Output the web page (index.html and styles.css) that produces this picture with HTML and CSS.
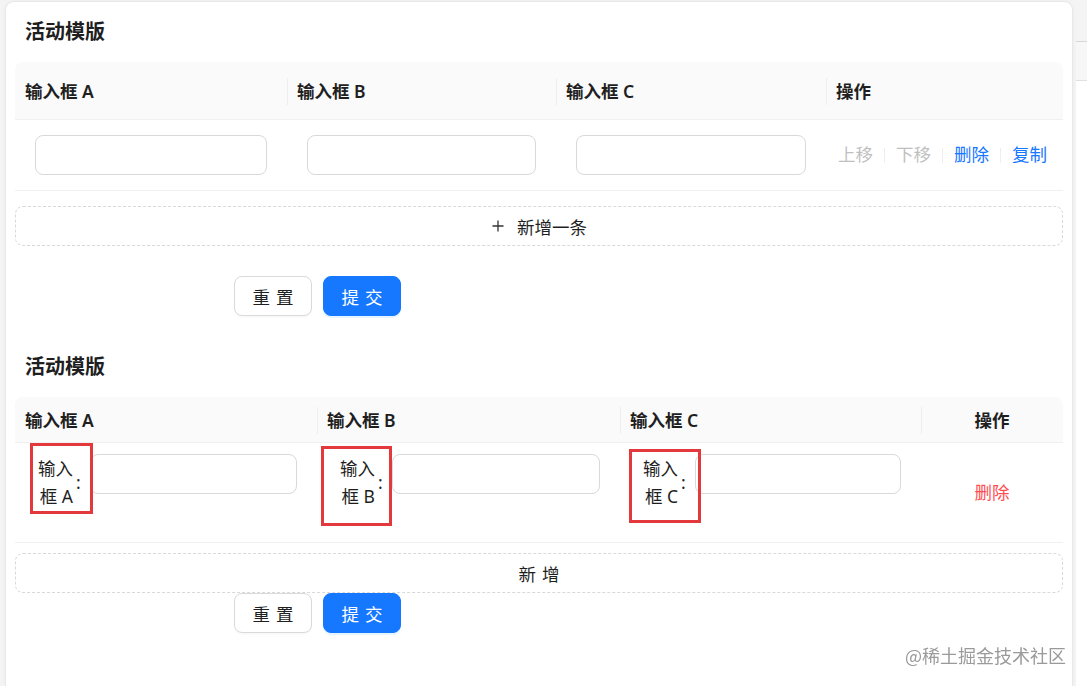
FILE: index.html
```html
<!DOCTYPE html>
<html lang="zh-CN">
<head>
<meta charset="utf-8">
<title>活动模版</title>
<link rel="stylesheet" href="styles.css">
</head>
<body>
<div class="page">
  <div class="card">
    <section class="block">
      <h2 class="title">活动模版</h2>
      <div class="tbl t1">
        <div class="thead">
          <div class="th">输入框 A</div>
          <div class="th sep">输入框 B</div>
          <div class="th sep">输入框 C</div>
          <div class="th sep">操作</div>
        </div>
        <div class="tr">
          <div class="td cell1"><input class="input" type="text"></div>
          <div class="td cell1"><input class="input" type="text"></div>
          <div class="td cell1"><input class="input" type="text"></div>
          <div class="td ops">
            <span class="op dis">上移</span><i class="split"></i>
            <span class="op dis">下移</span><i class="split"></i>
            <span class="op link">删除</span><i class="split"></i>
            <span class="op link">复制</span>
          </div>
        </div>
      </div>
      <button class="dashed add1" type="button">
        <svg class="plus" width="14" height="14" viewBox="0 0 14 14"><path d="M7 1.5v11M1.5 7h11" stroke="#333" stroke-width="1.3" fill="none"/></svg>
        <span>新增一条</span>
      </button>
      <div class="actions a1">
        <button class="btn" type="button"><span class="two">重置</span></button>
        <button class="btn primary" type="button"><span class="two">提交</span></button>
      </div>
    </section>

    <section class="block b2">
      <h2 class="title">活动模版</h2>
      <div class="tbl t2">
        <div class="thead">
          <div class="th">输入框 A</div>
          <div class="th sep">输入框 B</div>
          <div class="th sep">输入框 C</div>
          <div class="th sep center">操作</div>
        </div>
        <div class="tr">
          <div class="td cell2">
            <div class="fi">
              <label class="lbl"><span class="t">输入框 A</span></label>
              <input class="input" type="text">
            </div>
            <span class="mark mark-a"></span>
          </div>
          <div class="td cell2">
            <div class="fi">
              <label class="lbl"><span class="t">输入框 B</span></label>
              <input class="input" type="text">
            </div>
            <span class="mark mark-b"></span>
          </div>
          <div class="td cell2">
            <div class="fi">
              <label class="lbl"><span class="t">输入框 C</span></label>
              <input class="input" type="text">
            </div>
            <span class="mark mark-c"></span>
          </div>
          <div class="td del-cell"><span class="op danger">删除</span></div>
        </div>
      </div>
      <button class="dashed add2" type="button"><span class="two">新增</span></button>
      <div class="actions a2">
        <button class="btn" type="button"><span class="two">重置</span></button>
        <button class="btn primary" type="button"><span class="two">提交</span></button>
      </div>
    </section>
  </div>
  <div class="side">
    <div class="s1"></div>
    <div class="s2"></div>
  </div>
</div>
<div class="watermark">@稀土掘金技术社区</div>
</body>
</html>
```

FILE: styles.css
```css
* { box-sizing: border-box; }
html, body { margin: 0; height: 100%; }
body {
  background: #f4f4f4;
  font-family: "Noto Sans", "Noto Sans CJK SC", sans-serif;
  font-size: 17.5px;
  color: #1f1f1f;
  overflow: hidden;
}
.page {
  display: flex;
  height: 100%;
  padding: 1px 0 0 5px;
}
.card {
  flex: none;
  width: 1068px;
  height: 100%;
  background: #fff;
  border: 1px solid #e8e8e8;
  border-bottom: 0;
  border-radius: 9px 9px 0 0;
  padding: 0 9px;
  box-shadow: 0 0 4px rgba(0, 0, 0, 0.04);
}
.side {
  flex: 1;
  margin-left: 3px;
  background: #fff;
  display: flex;
  flex-direction: column;
}
.s1 { height: 41px; background: #f4f4f4; border-bottom: 1px solid #d6d6d6; }
.s2 { height: 39px; background: #f7f7f7; border-bottom: 1px solid #e0e0e0; }

.title {
  margin: 0;
  height: 60px;
  line-height: 60px;
  padding-left: 10px;
  font-size: 20px;
  font-weight: 600;
  color: #1f1f1f;
}
.b2 { margin-top: 21px; }

.tbl { display: grid; }
.t1 .thead, .t1 .tr { display: grid; grid-template-columns: 272px 269px 270px 237px; }
.t2 .thead, .t2 .tr { display: grid; grid-template-columns: 302px 303px 301px 142px; }

.thead {
  background: #fafafa;
  border-bottom: 1px solid #f0f0f0;
  border-radius: 8px 8px 0 0;
}
.t1 .thead { height: 58px; }
.t2 .thead { height: 46px; }
.th {
  position: relative;
  display: flex;
  align-items: center;
  padding: 0 10px;
  font-weight: 600;
}
.th.sep::before {
  content: "";
  position: absolute;
  left: 0;
  top: 50%;
  width: 1px;
  height: 27px;
  margin-top: -13px;
  background: #eeeeee;
}
.th.center { justify-content: center; }

.tr { border-bottom: 1px solid #f0f0f0; }
.t1 .tr { height: 71px; }
.t2 .tr { height: 100px; }

.td { display: flex; align-items: center; min-width: 0; }
.cell1 { padding: 0 20px; }
.input {
  display: block;
  width: 100%;
  min-width: 0;
  height: 40px;
  margin: 0;
  padding: 0 12px;
  border: 1px solid #d9d9d9;
  border-radius: 8px;
  background: #fff;
  font: inherit;
  outline: none;
}

.ops { padding-left: 12px; gap: 11px; }
.split { display: block; width: 1px; height: 15px; background: #eeeeee; }
.op { line-height: 1; white-space: nowrap; }
.dis { color: #bfbfbf; }
.link { color: #1677ff; }
.danger { color: #ff4d4f; }

.cell2 {
  position: relative;
  align-items: flex-start;
  padding: 11px 20px 0 10px;
}
.fi { display: flex; align-items: flex-start; width: 100%; min-width: 0; }
.fi .input { flex: 1 1 0; width: 0; min-width: 0; }
.lbl {
  flex: none;
  width: 65px;
  height: 56px;
  display: flex;
  align-items: center;
  justify-content: flex-end;
}
.lbl .t {
  width: 36px;
  text-align: right;
  line-height: 28px;
  color: #1f1f1f;
}
.lbl::after {
  content: ":";
  display: block;
  width: 5px;
  margin: 0 9px 0 3px;
  line-height: 1;
  position: relative;
  top: 1px;
}
.mark {
  position: absolute;
  border: 3px solid #e4393c;
  pointer-events: none;
}
.mark-a { left: 15px; top: 0; width: 63px; height: 71px; }
.mark-b { left: 4px; top: 3px; width: 71px; height: 80px; }
.mark-c { left: 9px; top: 6px; width: 72px; height: 74px; }

.del-cell { justify-content: center; }

.dashed {
  display: flex;
  align-items: center;
  justify-content: center;
  width: 100%;
  height: 40px;
  margin: 0;
  padding: 0;
  border: 1px dashed #d9d9d9;
  border-radius: 8px;
  background: #fff;
  font: inherit;
  color: #1f1f1f;
}
.add1 { margin-top: 15px; }
.add2 { margin-top: 10px; }
.plus { margin-right: 12px; flex: none; }

.actions {
  display: flex;
  gap: 11px;
  padding-left: 219px;
}
.a1 { margin-top: 30px; }
.a2 { margin-top: 0; }
.btn {
  width: 78px;
  height: 40px;
  margin: 0;
  padding: 0;
  border: 1px solid #d9d9d9;
  border-radius: 8px;
  background: #fff;
  color: #1f1f1f;
  font: inherit;
  box-shadow: 0 2px 0 rgba(0, 0, 0, 0.02);
}
.btn.primary {
  background: #1677ff;
  border-color: #1677ff;
  color: #fff;
  box-shadow: 0 2px 0 rgba(5, 145, 255, 0.1);
}
.two { letter-spacing: 0.34em; margin-right: -0.34em; }

.watermark {
  position: fixed;
  right: 21px;
  bottom: 18px;
  font-family: "Noto Sans CJK SC", sans-serif;
  font-size: 18px;
  color: #9a9a9a;
  text-shadow: 0 0 1px #fff;
}
```
